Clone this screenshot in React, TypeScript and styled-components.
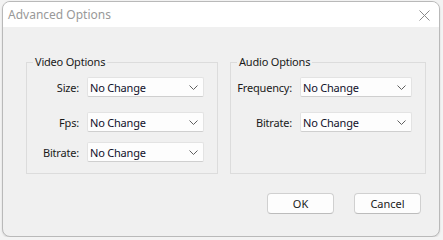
import React from 'react';
import styled, { createGlobalStyle } from 'styled-components';

const GlobalStyle = createGlobalStyle`
  html, body {
    margin: 0;
    padding: 0;
    background: #f3f3f3;
  }
  body {
    font-family: "Noto Sans", "Open Sans", sans-serif;
  }
`;

const Window = styled.div`
  width: 436px;
  height: 234px;
  margin: 1px 0 0 2px;
  background: #f0f0f0;
  border: 1px solid #b9b9b9;
  border-radius: 8px;
  overflow: hidden;
  display: flex;
  flex-direction: column;
  box-shadow: 0 1px 2px rgba(0, 0, 0, 0.12);
`;

const TitleBar = styled.div`
  height: 25px;
  background: #ffffff;
  display: flex;
  align-items: center;
  justify-content: space-between;
  padding: 0 9px 0 5px;
`;

const Title = styled.span`
  font-size: 12px;
  color: #999999;
`;

const CloseIcon = styled.svg`
  width: 11px;
  height: 11px;
  margin-top: 1px;
`;

const Body = styled.div`
  flex: 1;
  display: flex;
  flex-direction: column;
  padding: 28px 13px 0 23px;
`;

const GroupRow = styled.div`
  display: flex;
  gap: 12px;
`;

const Group = styled.fieldset<{ $width: number }>`
  box-sizing: border-box;
  flex: none;
  width: ${(p) => p.$width}px;
  height: 119px;
  margin: 0;
  padding: 0 13px 0 0;
  border: 1px solid #dcdcdc;
  min-width: 0;
`;

const Legend = styled.legend`
  font-size: 11px;
  letter-spacing: -0.2px;
  color: #1a1a1a;
  margin-left: 6px;
  padding: 0 2px;
  line-height: 14px;
`;

const Row = styled.div<{ $top: number }>`
  display: flex;
  align-items: center;
  justify-content: flex-end;
  gap: 8px;
  margin-top: ${(p) => p.$top}px;
`;

const Label = styled.span`
  font-size: 11px;
  letter-spacing: -0.2px;
  color: #1a1a1a;
`;

const Combo = styled.div<{ $width: number }>`
  box-sizing: border-box;
  flex: none;
  width: ${(p) => p.$width}px;
  height: 20px;
  background: #fdfdfd;
  border: 1px solid #e3e3e3;
  border-bottom-color: #cfcfcf;
  border-radius: 2px;
  display: flex;
  align-items: center;
  justify-content: space-between;
  padding: 0 5px 0 2px;
  font-size: 11px;
  letter-spacing: -0.2px;
  color: #10102a;
`;

const Chevron = styled.svg`
  width: 9px;
  height: 5px;
`;

const Buttons = styled.div`
  display: flex;
  justify-content: flex-end;
  gap: 20px;
  margin: 19px 5px 0 0;
`;

const Button = styled.button`
  box-sizing: border-box;
  width: 67px;
  height: 21px;
  background: #fdfdfd;
  border: 1px solid #d0d0d0;
  border-bottom-color: #bcbcbc;
  border-radius: 4px;
  font-family: inherit;
  font-size: 11px;
  color: #1a1a1a;
  padding: 0;
`;

const ComboBox: React.FC<{ width: number; value: string }> = ({ width, value }) => (
  <Combo $width={width}>
    <span>{value}</span>
    <Chevron viewBox="0 0 9 5">
      <path d="M0.5 0.5 L4.5 4.5 L8.5 0.5" fill="none" stroke="#606060" strokeWidth="1" />
    </Chevron>
  </Combo>
);

const App: React.FC = () => {
  const video = [
    { label: 'Size:', top: 8 },
    { label: 'Fps:', top: 15 },
    { label: 'Bitrate:', top: 10 },
  ];
  const audio = [
    { label: 'Frequency:', top: 8 },
    { label: 'Bitrate:', top: 15 },
  ];

  return (
    <>
      <GlobalStyle />
      <Window>
        <TitleBar>
          <Title>Advanced Options</Title>
          <CloseIcon viewBox="0 0 11 11">
            <path d="M0.5 0.5 L10.5 10.5 M10.5 0.5 L0.5 10.5" stroke="#8a8a8a" strokeWidth="1" />
          </CloseIcon>
        </TitleBar>
        <Body>
          <GroupRow>
            <Group $width={192}>
              <Legend>Video Options</Legend>
              {video.map((r) => (
                <Row key={r.label} $top={r.top}>
                  <Label>{r.label}</Label>
                  <ComboBox width={117} value="No Change" />
                </Row>
              ))}
            </Group>
            <Group $width={196}>
              <Legend>Audio Options</Legend>
              {audio.map((r) => (
                <Row key={r.label} $top={r.top}>
                  <Label>{r.label}</Label>
                  <ComboBox width={112} value="No Change" />
                </Row>
              ))}
            </Group>
          </GroupRow>
          <Buttons>
            <Button>OK</Button>
            <Button>Cancel</Button>
          </Buttons>
        </Body>
      </Window>
    </>
  );
};

export default App;
